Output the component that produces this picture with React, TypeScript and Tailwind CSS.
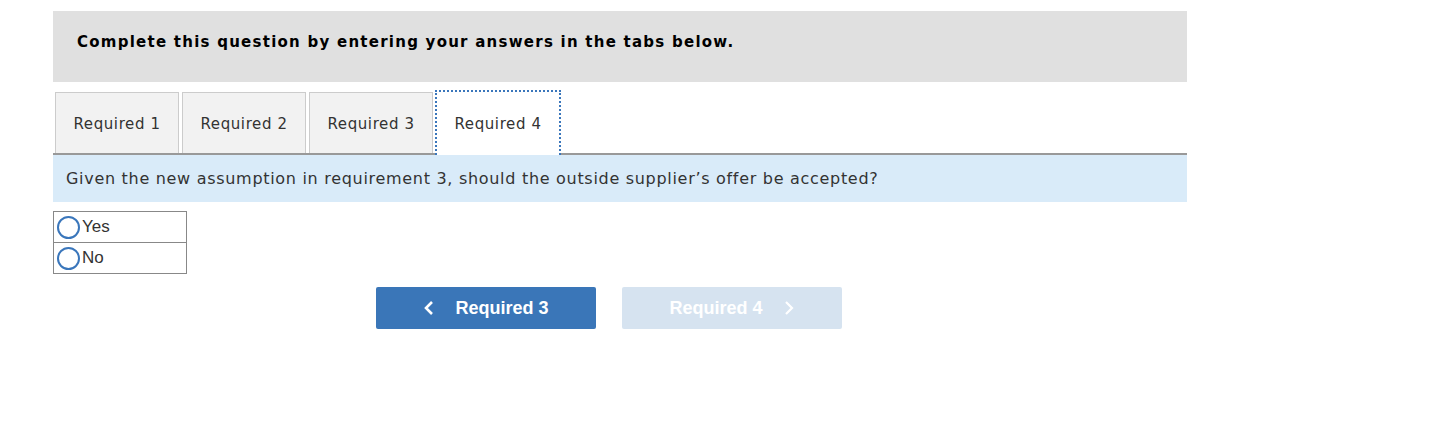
import React from "react";

const verdana = { fontFamily: '"DejaVu Sans", Verdana, sans-serif' };

function Radio({ label }: { label: string }) {
  return (
    <div className="flex items-center h-[30px] pl-[3px]">
      <span className="w-[23px] h-[23px] rounded-full border-2 border-[#3a76bb] bg-white box-border"></span>
      <span className="ml-[2px] text-[17px] text-[#333] font-['Liberation_Sans',Arial,sans-serif]">{label}</span>
    </div>
  );
}

export default function App() {
  const tabs = ["Required 1", "Required 2", "Required 3"];
  return (
    <div className="w-[1439px] h-[425px] bg-white">
      <div className="ml-[53px] w-[1134px] pt-[11px]">
        <div className="h-[71px] bg-[#e0e0e0] pl-[24px] pt-[20px]">
          <p className="text-[15px] font-bold text-black tracking-[1.25px]" style={verdana}>
            Complete this question by entering your answers in the tabs below.
          </p>
        </div>
        <div className="mt-[9px] flex items-end border-b-2 border-[#999] h-[64px] pl-[2px]">
          {tabs.map((t, i) => (
            <div
              key={t}
              className={`h-[61px] w-[124px] bg-[#f2f2f2] border border-b-0 border-[#cccccc] flex items-center justify-center pt-[3px] text-[15px] text-[#333] tracking-[0.6px] ${i === 0 ? "" : "ml-[3px]"}`}
              style={verdana}
            >
              {t}
            </div>
          ))}
          <div
            className="relative ml-[2px] h-[65px] -mb-[2px] w-[126px] bg-white border-2 border-b-0 border-dotted border-[#3a76bb] flex items-center justify-center pt-[1px] text-[15px] text-[#333] tracking-[0.6px]"
            style={verdana}
          >
            Required 4
          </div>
        </div>
        <div className="h-[47px] bg-[#d9ebf9] pl-[13px] flex items-center">
          <p className="text-[16px] text-[#333] tracking-[0.7px]" style={verdana}>
            Given the new assumption in requirement 3, should the outside supplier’s offer be accepted?
          </p>
        </div>
        <div className="mt-[9px] w-[134px] border border-[#888]">
          <Radio label="Yes" />
          <div className="border-t border-[#888]"></div>
          <Radio label="No" />
        </div>
        <div className="mt-[13px] ml-[323px] flex gap-[26px] font-['Liberation_Sans',Arial,sans-serif]">
          <button className="w-[220px] h-[42px] rounded-[2px] bg-[#3a76b8] text-white text-[18px] font-bold flex items-center justify-center">
            <svg width="12" height="16" viewBox="0 0 12 16" className="mr-[20px]">
              <path d="M9 2 L3 8 L9 14" stroke="white" strokeWidth="2.6" fill="none" />
            </svg>
            <span>Required 3</span>
          </button>
          <button className="w-[220px] h-[42px] rounded-[2px] bg-[#d6e3f0] text-white text-[18px] font-bold flex items-center justify-center">
            <span>Required 4</span>
            <svg width="12" height="16" viewBox="0 0 12 16" className="ml-[20px]">
              <path d="M3 2 L9 8 L3 14" stroke="white" strokeWidth="2.2" fill="none" />
            </svg>
          </button>
        </div>
      </div>
    </div>
  );
}
